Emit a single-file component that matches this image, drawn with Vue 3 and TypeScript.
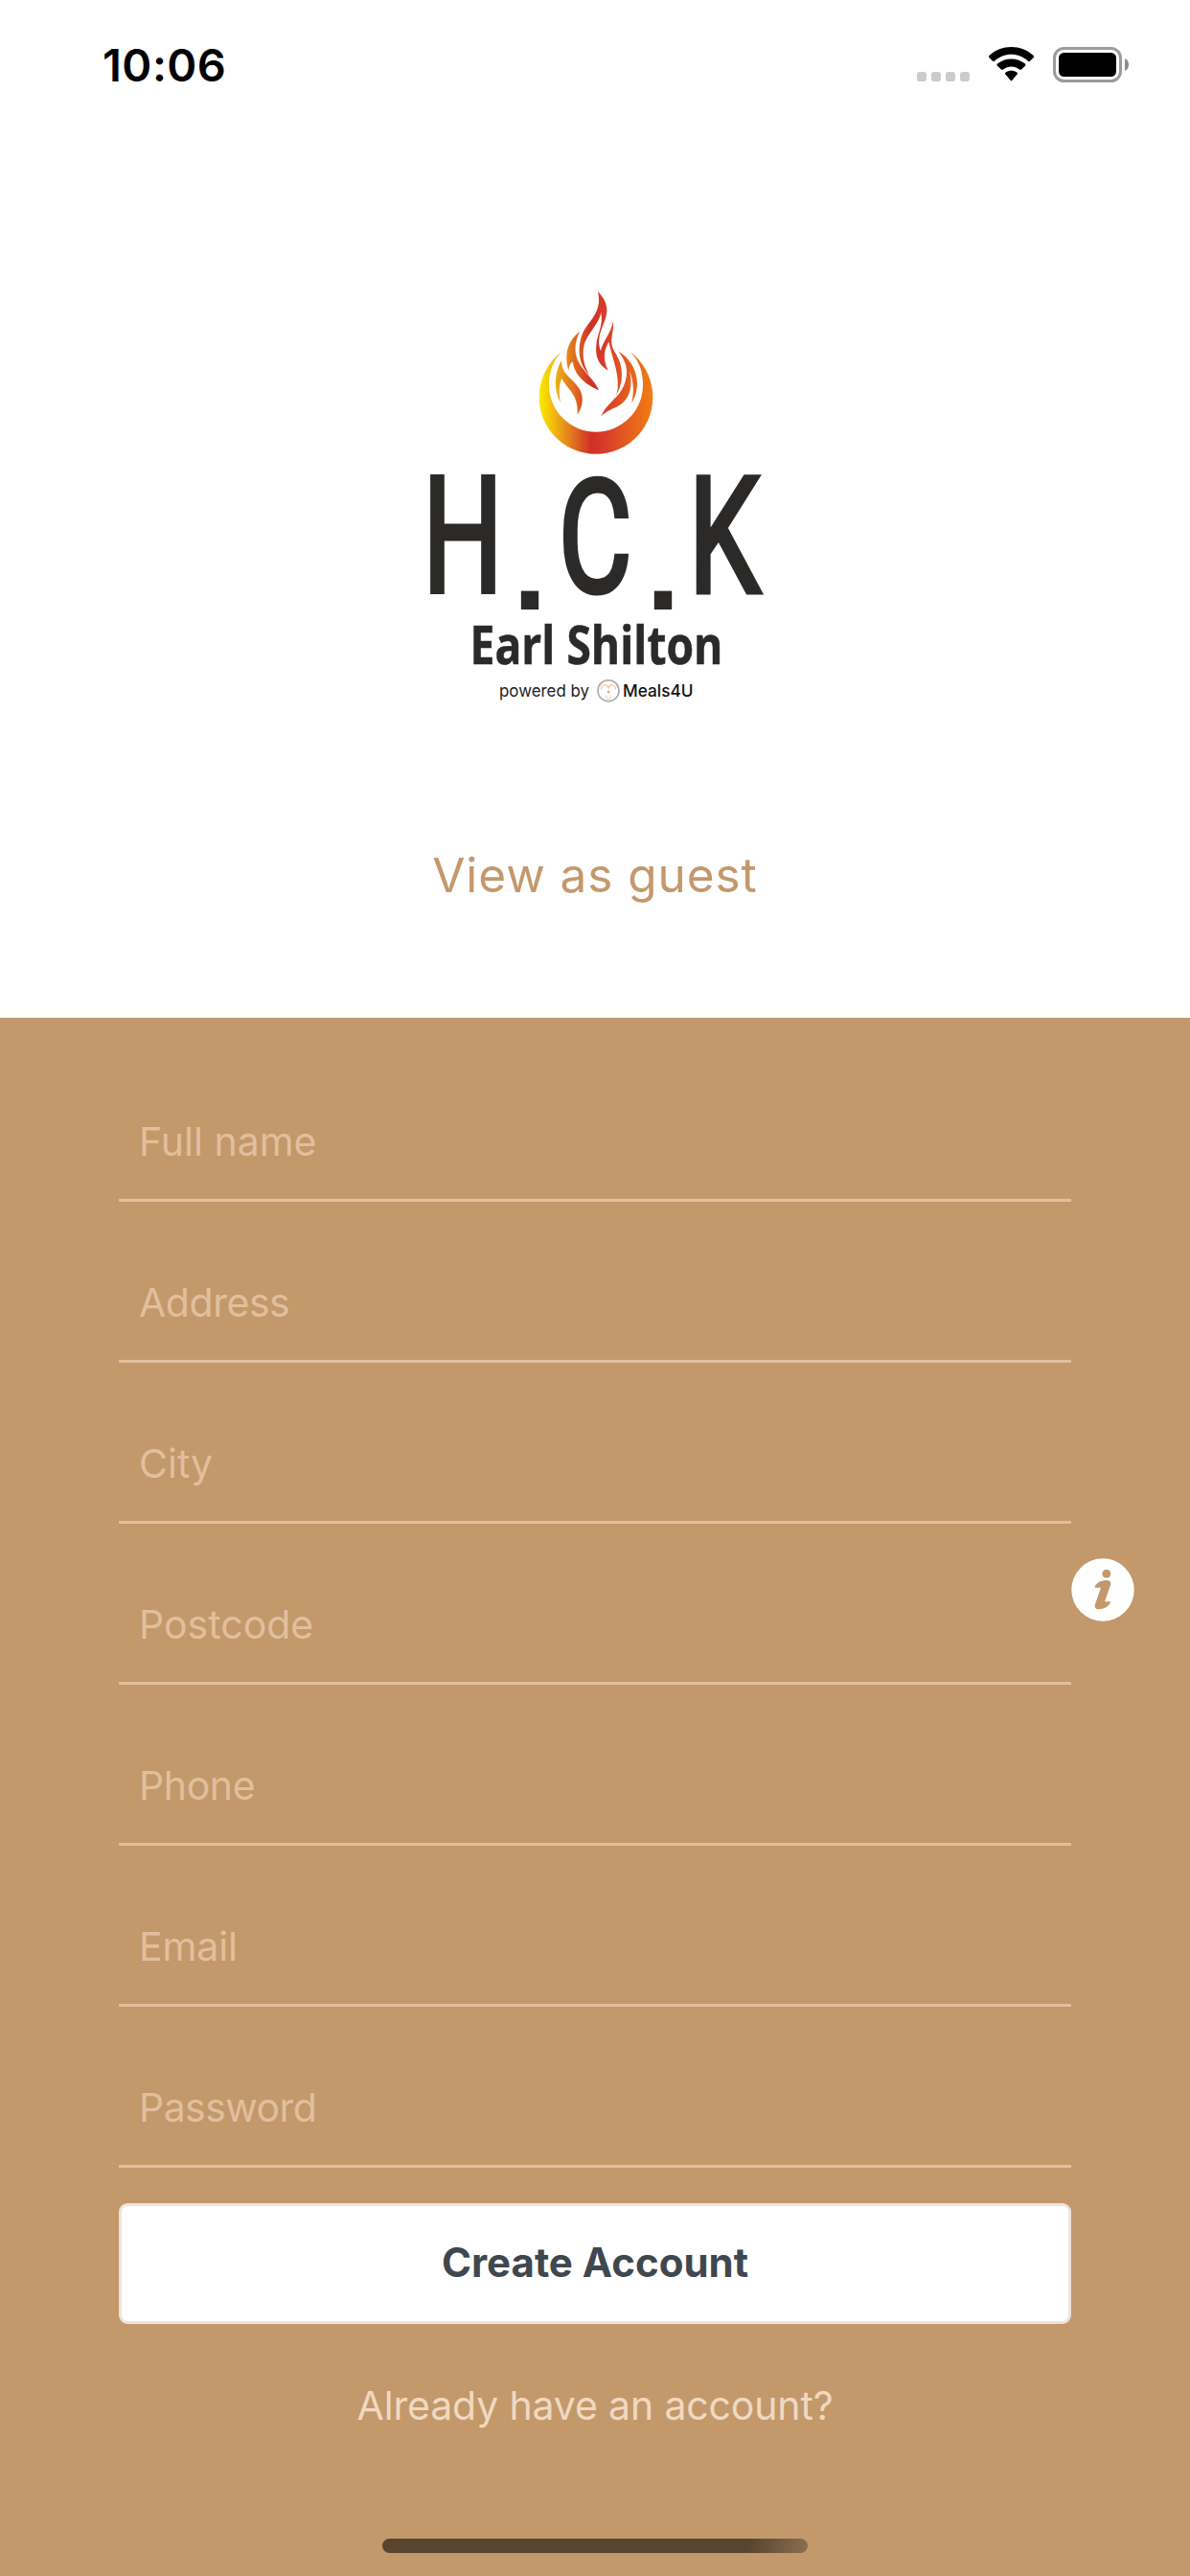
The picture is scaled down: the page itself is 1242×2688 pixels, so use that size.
<script setup lang="ts">
interface Field {
  label: string
  hasInfo?: boolean
  spacing: string
}

const fields: Field[] = [
  { label: 'Full name', spacing: '0px' },
  { label: 'Address', spacing: '-0.45px' },
  { label: 'City', spacing: '0px' },
  { label: 'Postcode', hasInfo: true, spacing: '0px' },
  { label: 'Phone', spacing: '-0.4px' },
  { label: 'Email', spacing: '-0.1px' },
  { label: 'Password', spacing: '-0.55px' },
]
</script>

<template>
  <div class="screen">
    <header class="status">
      <span class="time">10:06</span>
      <svg class="indicators" width="230" height="50" viewBox="950 42 230 50">
        <g fill="#cbcbcb">
          <rect x="957" y="75" width="10" height="10" rx="3" />
          <rect x="972" y="75" width="10" height="10" rx="3" />
          <rect x="987" y="75" width="10" height="10" rx="3" />
          <rect x="1002" y="75" width="10" height="10" rx="3" />
        </g>
        <path d="M1032.3 60 Q1031.5 59 1032.5 58 C1045 46 1066 46 1078.600 58 Q1079.500 59 1078.700 60 L1075 63.700 Q1074 64.500 1073 63.700 C1063 54.500 1048 54.500 1038 63.700 Q1037 64.500 1036 63.700 Z" />
        <path d="M1040.700 68.500 Q1040 67.500 1041 66.600 C1049 59.700 1062 59.700 1070 66.600 Q1071 67.500 1070.200 68.500 L1066 72.500 Q1065 73.200 1064 72.500 C1059 68.500 1052 68.500 1047 72.500 Q1046 73.200 1045 72.500 Z" />
        <path d="M1049.200 77.300 Q1048.500 76.500 1049.500 75.700 C1053 73.200 1058 73.200 1061.500 75.700 Q1062.500 76.500 1061.800 77.300 L1056.400 83.800 Q1055.500 84.800 1054.600 83.800 Z" />
        <rect x="1100.500" y="50.500" width="69" height="34" rx="10" fill="none" stroke="#9b9b9b" stroke-width="3" />
        <rect x="1105" y="55" width="60" height="25" rx="5.500" />
        <path d="M1174 61 C1179.300 63 1179.300 72 1174 74 Z" fill="#8c8c8c" />
      </svg>
    </header>

    <section class="brand">
      <svg class="logo" width="380" height="460" viewBox="430 290 380 460">
        <defs>
          <linearGradient id="fire" gradientUnits="userSpaceOnUse" x1="68" y1="0" x2="424" y2="0">
            <stop offset="0" stop-color="#f8ec00" />
            <stop offset="0.08" stop-color="#f5cd08" />
            <stop offset="0.25" stop-color="#e5861c" />
            <stop offset="0.46" stop-color="#cf2f28" />
            <stop offset="0.6" stop-color="#d9402a" />
            <stop offset="0.82" stop-color="#e8621d" />
            <stop offset="1" stop-color="#f07d14" />
          </linearGradient>
        </defs>
        <g transform="translate(540 290) scale(0.33333)" fill="url(#fire)">
          <path d="M138 232 A178 178 0 1 0 354 232 C382 260 394 298 393 335 A147 147 0 0 1 99 335 C99 298 110 260 138 232 Z" />
          <path d="M252 42 C284 76 286 104 272 138 C260 168 248 196 261 229 C266 200 290 180 300 136 C303 166 290 190 297 215 C306 240 328 256 327 306 C326 342 310 372 286 400 C304 382 318 362 314 320 C312 284 300 258 286 200 C272 226 266 250 284 290 C252 270 244 245 247 212 C248 178 270 150 262 108 C258 138 226 168 212 200 C200 236 206 268 225 304 C188 268 188 214 204 174 C220 136 268 110 252 42 Z" />
          <path d="M195 168 C148 206 150 250 160 290 C162 278 164 268 173 262 C178 306 216 336 256 352 C240 320 212 298 194 268 C176 236 178 204 195 168 Z" />
          <path d="M138 258 C116 296 112 350 136 392 C128 358 130 336 139 314 C156 350 192 362 188 428 C208 398 210 364 186 336 C164 308 138 300 138 258 Z" />
          <path d="M316 230 C362 254 398 326 358 392 C366 356 364 322 351 292 C364 344 348 386 314 402 C294 412 276 418 262 434 C276 398 306 384 326 352 C350 308 348 268 316 230 Z" />
        </g>

        <g class="initials">
          <text transform="translate(451 618) scale(0.69 0.99)" x="-14" y="0">H</text>
          <text class="dot" x="535" y="635.500">.</text>
          <text transform="translate(590 616.800) scale(0.69 0.96)" x="-10" y="0">C</text>
          <text class="dot" x="674" y="635.500">.</text>
          <text transform="translate(728.500 618) scale(0.7 0.99)" x="-14" y="0">K</text>
        </g>
        <text class="town" x="490.500" y="692.500" textLength="264" lengthAdjust="spacingAndGlyphs">Earl Shilton</text>
        <text class="powered" x="521" y="726.500" textLength="94" lengthAdjust="spacingAndGlyphs">powered by</text>
        <circle cx="635" cy="720.700" r="11" fill="#fff" stroke="#a9a9ab" stroke-width="1.600" />
        <g fill="none" stroke="#efc39c" stroke-width="1.200" stroke-linecap="round">
          <path d="M627.500 719 C628 714 633 713 635 718 C637 713 642 714 642.500 719" />
          <path d="M633 726 v1.500 a2 2 0 0 0 4 0 v-1.500" stroke-width="0.900" />
        </g>
        <circle cx="635" cy="722" r="1.200" fill="#ef9a62" />
        <text class="meals" x="650" y="726.500" textLength="73.500" lengthAdjust="spacingAndGlyphs">Meals4U</text>
      </svg>
      <a class="guest">View as guest</a>
    </section>

    <main class="form">
      <div v-for="field in fields" :key="field.label" class="field">
        <span class="label" :style="{ letterSpacing: field.spacing }">{{ field.label }}</span>
        <svg v-if="field.hasInfo" class="info" width="66" height="66" viewBox="0 0 66 66">
          <circle cx="33" cy="33" r="32.700" fill="#fff" />
          <circle cx="36.800" cy="16.200" r="4.400" fill="#c3986b" />
          <path d="M24.500 30.700 C25.500 25 32 22.800 37.500 22.900 C40.500 23 42 25 41 28 L35 45.200 H41 C40.200 50.500 33.500 53.200 28.500 53.200 C25 53.200 24 51 25 48 L31 30.700 Z" fill="#c3986b" />
        </svg>
      </div>
      <button class="create" type="button">Create Account</button>
      <a class="signin">Already have an account?</a>
      <div class="home-bar"></div>
    </main>
  </div>
</template>

<style>
body {
  margin: 0;
  background: #fff;
}
</style>

<style scoped>
.screen {
  width: 1242px;
  height: 2688px;
  display: flex;
  flex-direction: column;
  overflow: hidden;
  background: #fff;
  font-family: Inter, "Liberation Sans", sans-serif;
}

.status {
  height: 132px;
  flex: none;
  box-sizing: border-box;
  padding: 42px 62px 0 107px;
  display: flex;
  justify-content: space-between;
  align-items: flex-start;
}

.time {
  font-size: 47px;
  line-height: 52px;
  font-weight: 600;
  letter-spacing: 0.500px;
  color: #000;
}

.brand {
  height: 930px;
  flex: none;
  box-sizing: border-box;
  padding-top: 158px;
  display: flex;
  flex-direction: column;
  align-items: center;
}

.logo {
  display: block;
  margin-right: 2px;
}

.initials text {
  font-family: Roboto, sans-serif;
  font-weight: 400;
  font-size: 170px;
  fill: #2b2a29;
  stroke: #2b2a29;
  stroke-width: 4.500px;
  stroke-linejoin: miter;
  vector-effect: non-scaling-stroke;
}

.initials .dot {
  font-family: "Liberation Sans", sans-serif;
  font-weight: 700;
  font-size: 130px;
  stroke: none;
}

.town {
  font-family: "Open Sans", "Noto Sans", sans-serif;
  font-weight: 700;
  font-size: 56px;
  fill: #2b2a29;
  stroke: #2b2a29;
  stroke-width: 0.600px;
}

.powered {
  font-size: 17.500px;
  fill: #222;
}

.meals {
  font-size: 17.500px;
  font-weight: 500;
  fill: #111;
}

.guest {
  margin-top: 131px;
  font-size: 49.500px;
  line-height: 64px;
  letter-spacing: 0.950px;
  color: #c4986c;
}

.form {
  flex: 1;
  display: flex;
  flex-direction: column;
  padding: 24px 124px 0;
  background: #c3986b;
}

.field {
  position: relative;
  height: 168px;
  flex: none;
  box-sizing: border-box;
  border-bottom: 3px solid #e1bf9d;
  padding: 80px 0 0 21px;
}

.label {
  display: block;
  font-size: 41px;
  line-height: 50px;
  color: #e1bf9d;
}

.info {
  position: absolute;
  left: 994px;
  top: 36px;
}

.create {
  height: 126px;
  flex: none;
  margin-top: 37px;
  border: 3px solid #efe3da;
  border-radius: 9px;
  background: #fff;
  padding: 0 0 3px;
  font-family: inherit;
  font-size: 42px;
  font-weight: 700;
  color: #3f474f;
}

.signin {
  margin-top: 59px;
  text-align: center;
  font-size: 41px;
  line-height: 52px;
  letter-spacing: -0.150px;
  color: #f0d9c0;
}

.home-bar {
  width: 444px;
  height: 15px;
  margin: 113px auto 0;
  border-radius: 8px;
  background: linear-gradient(100deg, #59452f 0%, #59452f 86%, #8c6e50 100%);
}
</style>
